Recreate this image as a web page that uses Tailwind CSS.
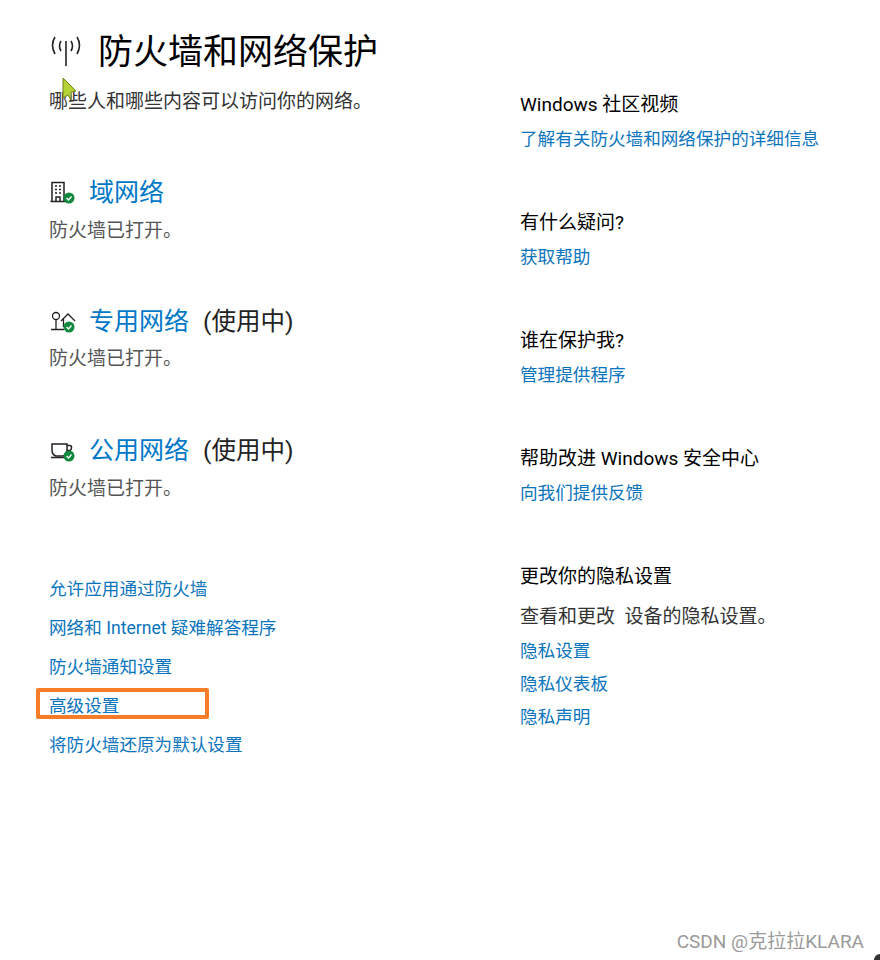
<!DOCTYPE html>
<html lang="zh-CN">
<head>
  <meta charset="UTF-8">
  <title>防火墙和网络保护</title>
  <script src="https://cdn.jsdelivr.net/npm/@tailwindcss/browser@4"></script>
</head>
<body class="bg-white font-['Roboto','Noto_Sans_CJK_SC',sans-serif] text-[17.6px] leading-[24px] text-[#1a1a1a]">
  <div class="relative w-[880px] h-[960px] overflow-hidden flex">

    <!-- left column -->
    <div class="w-[520px] pl-[49px] pt-[30px] flex flex-col shrink-0">
      <div class="flex items-center h-[46px]">
        <svg class="w-[32px] h-[30px] ml-[1px] mr-[16px] mb-[4px]" viewBox="0 0 32 30" fill="none" stroke="#222" stroke-width="1.600">
          <path d="M16 5V30"/>
          <path d="M11 5q-3 5 0 10M21 5q3 5 0 10"/>
          <path d="M5 1q-5 8 0 17M27 1q5 8 0 17"/>
        </svg>
        <h1 class="text-[35px] leading-[46px] text-black">防火墙和网络保护</h1>
      </div>
      <p class="text-[19px] mt-[14px] text-[#333]">哪些人和哪些内容可以访问你的网络。</p>

      <div class="mt-[61px] flex items-center h-[36px]">
        <svg class="w-[26px] h-[24px] ml-[1px] mr-[13px]" viewBox="0 0 26 24" fill="none">
          <path d="M2 1.500h12v19H2zM0.500 20.500h15" stroke="#222" stroke-width="1.500"/>
          <path d="M5 5h2M9 5h2M5 8.500h2M9 8.500h2M5 12h2M9 12h2M6 20v-4h4v4" stroke="#222" stroke-width="1.500"/>
          <circle cx="19" cy="17" r="5.500" fill="#10893e"/>
          <path d="M16.500 17l2 2 3-3.500" stroke="#fff" stroke-width="1.400"/>
        </svg>
        <a class="text-[25px] text-[#0078c8]">域网络</a>
      </div>
      <p class="mt-[8px] text-[19px] text-[#555]">防火墙已打开。</p>

      <div class="mt-[61px] flex items-center h-[36px]">
        <svg class="w-[26px] h-[24px] ml-[1px] mr-[13px]" viewBox="0 0 26 24" fill="none" stroke="#222" stroke-width="1.300">
          <circle cx="6" cy="6" r="3.500"/>
          <path d="M6 9.500v10M1 19.500h13"/>
          <path d="M11 11l7-7 7 7M13.500 9v8"/>
          <circle cx="19" cy="17" r="5.500" fill="#10893e" stroke="none"/>
          <path d="M16.500 17l2 2 3-3.500" stroke="#fff" stroke-width="1.400"/>
        </svg>
        <a class="text-[25px] text-[#0078c8]">专用网络</a>
        <span class="text-[24.5px] text-[#222] ml-[14px]">(使用中)</span>
      </div>
      <p class="mt-[7px] text-[19px] text-[#555]">防火墙已打开。</p>

      <div class="mt-[62px] flex items-center h-[36px]">
        <svg class="w-[26px] h-[24px] ml-[1px] mr-[13px]" viewBox="0 0 26 24" fill="none" stroke="#222" stroke-width="1.500">
          <path d="M2 5h15v6q0 5-4 6H6q-4-1-4-6z"/>
          <path d="M17 6.500h3q1.500 0 1.500 2t-1.500 3h-3"/>
          <path d="M1 18.500h15"/>
          <circle cx="19" cy="17" r="5.500" fill="#10893e" stroke="none"/>
          <path d="M16.500 17l2 2 3-3.500" stroke="#fff" stroke-width="1.400"/>
        </svg>
        <a class="text-[25px] text-[#0078c8]">公用网络</a>
        <span class="text-[24.5px] text-[#222] ml-[14px]">(使用中)</span>
      </div>
      <p class="mt-[8px] text-[19px] text-[#555]">防火墙已打开。</p>

      <div class="mt-[76px] flex flex-col gap-[15px] text-[#0a74bd]">
        <a>允许应用通过防火墙</a>
        <a>网络和 Internet 疑难解答程序</a>
        <a>防火墙通知设置</a>
        <a>高级设置</a>
        <a>将防火墙还原为默认设置</a>
      </div>
    </div>

    <!-- right column -->
    <div class="flex-1 pt-[93px] flex flex-col">
      <p class="text-[19px] text-black">Windows 社区视频</p>
      <a class="mt-[10px] text-[#0a74bd]">了解有关防火墙和网络保护的详细信息</a>
      <p class="mt-[60px] text-[19px] text-black">有什么疑问?</p>
      <a class="mt-[10px] text-[#0a74bd]">获取帮助</a>
      <p class="mt-[60px] text-[19px] text-black">谁在保护我?</p>
      <a class="mt-[10px] text-[#0a74bd]">管理提供程序</a>
      <p class="mt-[60px] text-[19px] text-black">帮助改进 Windows 安全中心</p>
      <a class="mt-[10px] text-[#0a74bd]">向我们提供反馈</a>
      <p class="mt-[60px] text-[19px] text-black">更改你的隐私设置</p>
      <p class="mt-[16px] text-[19px] text-[#333]">查看和更改&nbsp;&nbsp;设备的隐私设置。</p>
      <a class="mt-[10px] text-[#0a74bd]">隐私设置</a>
      <a class="mt-[9px] text-[#0a74bd]">隐私仪表板</a>
      <a class="mt-[9px] text-[#0a74bd]">隐私声明</a>
    </div>

    <!-- overlays: annotation box, cursor, watermark -->
    <div class="absolute left-[36px] top-[688px] w-[173px] h-[31px] border-[4px] border-[#f97d28] rounded-[2px]"></div>
    <svg class="absolute left-[62px] top-[77px] w-[16px] h-[24px]" viewBox="0 0 16 24">
      <path d="M1 1l13 13-5 1 0 8-3-5-5 3z" fill="#b5d334" stroke="#6f7f18" stroke-width="1"/>
    </svg>
    <div class="absolute right-[16px] top-[930px] text-[19px] text-[#9a9a9a]">CSDN @克拉拉KLARA</div>
    <div class="absolute right-0 bottom-0 w-[6px] h-[6px] bg-[#333] rounded-tl-[6px]"></div>
  </div>
</body>
</html>
